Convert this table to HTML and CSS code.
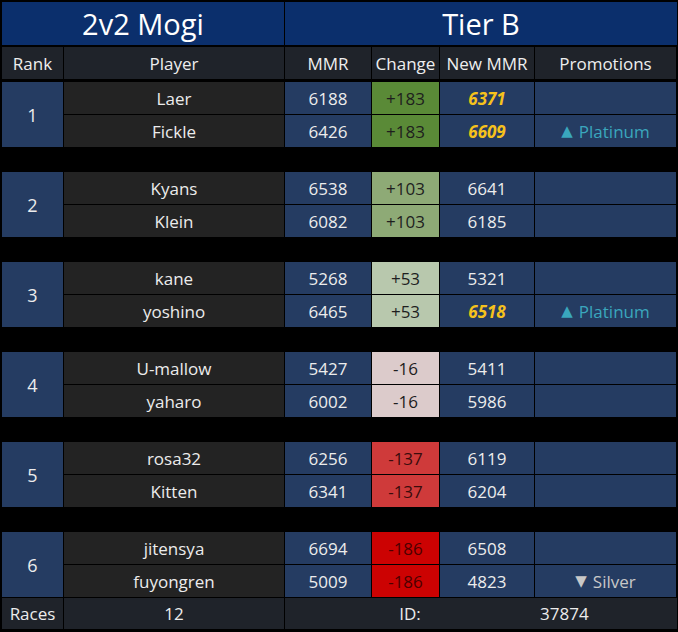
FILE: index.html
```html
<!DOCTYPE html>
<html>
<head>
<meta charset="utf-8">
<link rel="stylesheet" href="styles.css">
</head>
<body>
<div class="board">
  <div class="title">
    <div class="cell t">2v2 Mogi</div>
    <div class="cell t">Tier B</div>
  </div>
  <div class="grid head">
    <div class="cell h">Rank</div>
    <div class="cell h">Player</div>
    <div class="cell h">MMR</div>
    <div class="cell h">Change</div>
    <div class="cell h">New MMR</div>
    <div class="cell h">Promotions</div>
  </div>

  <div class="grid group">
    <div class="cell rank">1</div>
    <div class="cell player">Laer</div>
    <div class="cell blue">6188</div>
    <div class="cell chg c1">+183</div>
    <div class="cell blue gold">6371</div>
    <div class="cell blue"></div>
    <div class="cell player">Fickle</div>
    <div class="cell blue">6426</div>
    <div class="cell chg c1">+183</div>
    <div class="cell blue gold">6609</div>
    <div class="cell blue plat"><span class="tri">▲</span>Platinum</div>
  </div>

  <div class="grid group">
    <div class="cell rank">2</div>
    <div class="cell player">Kyans</div>
    <div class="cell blue">6538</div>
    <div class="cell chg c2">+103</div>
    <div class="cell blue">6641</div>
    <div class="cell blue"></div>
    <div class="cell player">Klein</div>
    <div class="cell blue">6082</div>
    <div class="cell chg c2">+103</div>
    <div class="cell blue">6185</div>
    <div class="cell blue"></div>
  </div>

  <div class="grid group">
    <div class="cell rank">3</div>
    <div class="cell player">kane</div>
    <div class="cell blue">5268</div>
    <div class="cell chg c3">+53</div>
    <div class="cell blue">5321</div>
    <div class="cell blue"></div>
    <div class="cell player">yoshino</div>
    <div class="cell blue">6465</div>
    <div class="cell chg c3">+53</div>
    <div class="cell blue gold">6518</div>
    <div class="cell blue plat"><span class="tri">▲</span>Platinum</div>
  </div>

  <div class="grid group">
    <div class="cell rank">4</div>
    <div class="cell player">U-mallow</div>
    <div class="cell blue">5427</div>
    <div class="cell chg c4">-16</div>
    <div class="cell blue">5411</div>
    <div class="cell blue"></div>
    <div class="cell player">yaharo</div>
    <div class="cell blue">6002</div>
    <div class="cell chg c4">-16</div>
    <div class="cell blue">5986</div>
    <div class="cell blue"></div>
  </div>

  <div class="grid group">
    <div class="cell rank">5</div>
    <div class="cell player">rosa32</div>
    <div class="cell blue">6256</div>
    <div class="cell chg c5">-137</div>
    <div class="cell blue">6119</div>
    <div class="cell blue"></div>
    <div class="cell player">Kitten</div>
    <div class="cell blue">6341</div>
    <div class="cell chg c5">-137</div>
    <div class="cell blue">6204</div>
    <div class="cell blue"></div>
  </div>

  <div class="grid group last">
    <div class="cell rank">6</div>
    <div class="cell player">jitensya</div>
    <div class="cell blue">6694</div>
    <div class="cell chg c6">-186</div>
    <div class="cell blue">6508</div>
    <div class="cell blue"></div>
    <div class="cell player">fuyongren</div>
    <div class="cell blue">5009</div>
    <div class="cell chg c6">-186</div>
    <div class="cell blue">4823</div>
    <div class="cell blue silver"><span class="tri">▼</span>Silver</div>
  </div>

  <div class="footer">
    <div class="cell f">Races</div>
    <div class="cell f">12</div>
    <div class="cell f idcell">
      <span class="idlabel">ID:</span>
      <span class="idnum">37874</span>
    </div>
  </div>
</div>
</body>
</html>
```

FILE: styles.css
```css
html, body {
  margin: 0;
  padding: 0;
  background: #000;
}
.board {
  width: 678px;
  height: 632px;
  box-sizing: border-box;
  padding: 2px 2px 3px 2px;
  background: #000;
  font-family: "Open Sans", "Noto Sans", sans-serif;
  color: #ececec;
}
.cell {
  display: flex;
  align-items: center;
  justify-content: center;
  white-space: nowrap;
  font-size: 17px;
}
.title {
  display: grid;
  grid-template-columns: 282px 392px;
  column-gap: 1px;
  height: 43px;
  margin-bottom: 2px;
}
.t {
  background: #0b2f6c;
  color: #fff;
  font-size: 29px;
}
.grid {
  display: grid;
  grid-template-columns: 61px 220px 86px 67px 94px 141px;
  column-gap: 1px;
}
.head {
  height: 32px;
  margin-bottom: 3px;
}
.h {
  background: #1f232a;
  color: #eee;
}
.group {
  grid-template-rows: 32px 32px;
  row-gap: 1px;
  margin-bottom: 25px;
}
.group.last {
  margin-bottom: 1px;
}
.rank {
  grid-row: span 2;
  background: #253c62;
  font-size: 18px;
}
.player {
  background: #232323;
}
.blue {
  background: #253c62;
}
.gold {
  color: #f6c21c;
  font-weight: 700;
  font-style: italic;
}
.plat {
  color: #3aa7bd;
}
.silver {
  color: #c8c8c8;
}
.tri {
  font-family: "DejaVu Sans", sans-serif;
  font-size: 15px;
  margin-right: 6px;
}
.chg {
  color: #1e1e1e;
}
.c1 { background: #5a8a37; }
.c2 { background: #8eaa76; }
.c3 { background: #b8c8ad; }
.c4 { background: #dccbcb; }
.c5 { background: #cf3a3a; color: #3a0c0c; }
.c6 { background: #cc0202; color: #4d0000; }
.footer {
  display: grid;
  grid-template-columns: 61px 220px 392px;
  column-gap: 1px;
  height: 31px;
}
.f {
  background: #1f232a;
}
.idcell {
  justify-content: flex-start;
}
.idlabel {
  width: 250px;
  text-align: center;
}
.idnum {
  padding-left: 5px;
}
```
